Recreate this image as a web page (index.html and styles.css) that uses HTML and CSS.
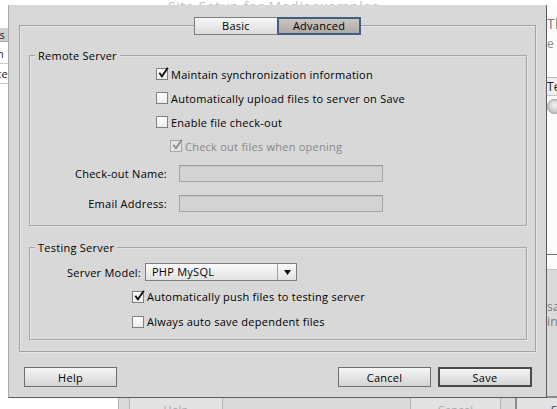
FILE: index.html
```html
<!DOCTYPE html>
<html>
<head>
<meta charset="utf-8">
<link rel="stylesheet" href="styles.css">
</head>
<body>
<div class="desk">
  <div class="titlebar"><span class="title">Site Setup for Mediaexamples</span></div>

  <div class="sidelist">
    <div class="sl-head">Servers</div>
    <div class="sl-row sl-n">Location</div>
    <div class="sl-row sl-ce">Preference</div>
  </div>

  <div class="bgwin">
    <div class="bg-upper">
      <p class="bg-lead">The settings</p>
      <p class="bg-sub">e</p>
      <div class="bg-table">
        <div class="bg-thead">Testing</div>
        <div class="bg-trow"><span class="bg-radio"></span></div>
      </div>
    </div>
    <div class="bg-lower">
      <p class="bg-note">save</p>
      <p class="bg-note">in</p>
      <div class="bg-buttons">
        <span class="ghost ghost-help">Help</span>
        <span class="ghost ghost-cancel">Cancel</span>
        <span class="ghost ghost-save">Save</span>
      </div>
    </div>
  </div>

  <div class="dialog">
    <div class="tabs">
      <span class="tab tab-basic">Basic</span>
      <span class="tab tab-adv">Advanced</span>
    </div>
    <div class="pane">
      <div class="group group-remote">
        <div class="legend">Remote Server</div>
        <div class="row check-row ind-remote">
          <span class="cb"><svg viewBox="0 0 12 12" width="12" height="12"><path d="M2.3 5.8 L4.9 9.3 L10.8 0.8" fill="none" stroke="#111" stroke-width="1.9"/></svg></span>
          <span>Maintain synchronization information</span>
        </div>
        <div class="row check-row ind-remote">
          <span class="cb"></span>
          <span>Automatically upload files to server on Save</span>
        </div>
        <div class="row check-row ind-remote">
          <span class="cb"></span>
          <span>Enable file check-out</span>
        </div>
        <div class="row check-row ind-sub disabled">
          <span class="cb cb-dis"><svg viewBox="0 0 12 12" width="12" height="12"><path d="M2.3 5.8 L4.9 9.3 L10.8 0.8" fill="none" stroke="#8a8a8a" stroke-width="1.7"/></svg></span>
          <span>Check out files when opening</span>
        </div>
        <div class="row field-row">
          <span class="flabel">Check-out Name:</span>
          <span class="field"></span>
        </div>
        <div class="row field-row">
          <span class="flabel">Email Address:</span>
          <span class="field"></span>
        </div>
      </div>

      <div class="group group-testing">
        <div class="legend">Testing Server</div>
        <div class="row select-row">
          <span class="slabel">Server Model:</span>
          <span class="select">
            <span class="select-text">PHP MySQL</span>
            <span class="select-arrow"><svg viewBox="0 0 7 5" width="7" height="5"><polygon points="0,0 7,0 3.5,5" fill="#111"/></svg></span>
          </span>
        </div>
        <div class="row check-row2 ind-test">
          <span class="cb"><svg viewBox="0 0 12 12" width="12" height="12"><path d="M2.3 5.8 L4.9 9.3 L10.8 0.8" fill="none" stroke="#111" stroke-width="1.9"/></svg></span>
          <span>Automatically push files to testing server</span>
        </div>
        <div class="row check-row2 ind-test">
          <span class="cb"></span>
          <span>Always auto save dependent files</span>
        </div>
      </div>
    </div>

    <div class="footer">
      <span class="btn">Help</span>
      <span class="spacer"></span>
      <span class="btn">Cancel</span>
      <span class="btn btn-default">Save</span>
    </div>
  </div>
</div>
</body>
</html>
```

FILE: styles.css
```css
html, body {
  margin: 0;
  padding: 0;
  background: #ffffff;
}

.desk {
  position: relative;
  width: 557px;
  height: 409px;
  overflow: hidden;
  font-family: "Open Sans", "Noto Sans", "DejaVu Sans", sans-serif;
  font-size: 11px;
  letter-spacing: 0.25px;
  color: #000;
}

/* parent window title, mostly hidden above the viewport */
.titlebar {
  height: 5px;
  overflow: hidden;
  text-align: center;
  padding-right: 10px;
}
.title {
  display: inline-block;
  margin-top: -12px;
  font-size: 14px;
  line-height: 14px;
  color: #c4c4c4;
  letter-spacing: 0.6px;
}

/* list panel at the far left, mostly behind the sheet */
.sidelist {
  position: absolute;
  left: -90px;
  top: 28px;
  width: 98px;
}
.sl-head {
  height: 13px;
  line-height: 13px;
  background: #cfcfcf;
  border-bottom: 1px solid #a8a8a8;
  text-align: right;
  padding-right: 3px;
  color: #222;
}
.sl-row {
  height: 19px;
  line-height: 19px;
  border-bottom: 1px solid #c8c8c8;
  text-align: right;
  color: #222;
}
.sl-n { padding-right: 4px; height: 21px; line-height: 23px; }
.sl-ce { padding-right: 0; }

/* the Site Setup window behind the sheet */
.bgwin {
  position: absolute;
  left: 118px;
  top: 5px;
  width: 520px;
  height: 420px;
  display: flex;
  flex-direction: column;
  border-left: 1px solid #b5b5b5;
  box-sizing: border-box;
}
.bg-upper {
  height: 265px;
  background: #fbfbfb;
  border-bottom: 1px solid #c4c4c4;
  padding-left: 428px;
  box-sizing: border-box;
}
.bg-lead {
  margin: 12px 0 0;
  font-size: 14px;
  line-height: 14px;
  color: #7a7a7a;
}
.bg-sub {
  margin: 7px 0 0;
  font-size: 12px;
  line-height: 12px;
  color: #8a8a8a;
}
.bg-table {
  margin-top: 27px;
  height: 178px;
  border-top: 1px solid #b8b8b8;
  border-bottom: 1px solid #6e6e6e;
  box-sizing: border-box;
}
.bg-thead {
  height: 17px;
  line-height: 17px;
  background: #efefef;
  border-bottom: 1px solid #c8c8c8;
  font-size: 12px;
  color: #222;
}
.bg-trow {
  height: 20px;
  display: flex;
  align-items: center;
}
.bg-radio {
  width: 13px;
  height: 13px;
  border-radius: 50%;
  background: radial-gradient(circle at 50% 40%, #f4f4f4, #b0b0b0);
  border: 1px solid #9a9a9a;
}
.bg-lower {
  flex: 1;
  background: #dadada;
  padding-left: 428px;
  padding-top: 29px;
}
.bg-note {
  margin: 0;
  font-size: 12px;
  line-height: 15px;
  color: #7a7a7a;
}
.bg-buttons {
  margin-top: 67px;
  margin-left: -418px;
  display: flex;
}
.ghost {
  box-sizing: border-box;
  height: 22px;
  border: 1px solid #b4b4b4;
  background: #e2e2e2;
  color: #a6a6a6;
  display: flex;
  align-items: center;
  justify-content: center;
  padding-top: 4px;
}
.ghost-help { width: 94px; }
.ghost-cancel { width: 91px; margin-left: 187px; }
.ghost-save { width: 96px; margin-left: 14px; border: 2px solid #8a8a8a; color: #333; justify-content: flex-start; padding-left: 34px; }

/* the sheet */
.dialog {
  position: absolute;
  left: 8px;
  top: 5px;
  width: 539px;
  height: 393px;
  box-sizing: border-box;
  background: #d8d8d8;
  border-left: 1px solid #a9a9a9;
  border-right: 1px solid #5c5c5c;
  border-bottom: 1px solid #5c5c5c;
  display: flex;
  flex-direction: column;
}

.tabs {
  display: flex;
  justify-content: center;
  margin-top: 12px;
  height: 18px;
  position: relative;
  z-index: 1;
}
.tab {
  box-sizing: border-box;
  height: 18px;
  display: flex;
  align-items: center;
  justify-content: center;
  border: 1px solid #7c7c7c;
  background: linear-gradient(#f7f7f7, #dcdcdc);
  line-height: 14px;
}
.tab-basic {
  width: 83px;
  border-right: none;
}
.tab-adv {
  width: 84px;
  border: 2px solid #3f5f86;
  background: linear-gradient(#cbc5bf, #b0aaa4);
}

.pane {
  margin: -10px 10px 0;
  height: 327px;
  box-sizing: border-box;
  border: 1px solid #a2a2a2;
  box-shadow: inset 1px 1px 0 #e6e6e6, 1px 1px 0 #e6e6e6;
  padding: 29px 8px 0 9px;
}

.group {
  border: 1px solid #a6a6a6;
  box-shadow: inset 1px 1px 0 #e4e4e4, 1px 1px 0 #e4e4e4;
}
.group-remote {
  padding-bottom: 7px;
}
.group-testing {
  margin-top: 21px;
  padding-bottom: 5px;
}
.legend {
  margin: -7px 0 0 5px;
  padding: 0 3px;
  width: fit-content;
  height: 13px;
  line-height: 13px;
  background: #d8d8d8;
}

.row {
  display: flex;
  align-items: center;
}
.check-row { height: 24px; }
.check-row2 { height: 25px; }
.ind-remote { padding-left: 126px; }
.ind-sub { padding-left: 140px; }
.ind-test { padding-left: 102px; }
.disabled { color: #888; }

.cb {
  box-sizing: border-box;
  width: 12px;
  height: 12px;
  margin-right: 3px;
  border: 1px solid #7e7e7e;
  background: linear-gradient(#ffffff, #ececec);
  position: relative;
  flex: none;
}
.cb svg {
  position: absolute;
  left: 0;
  top: -2px;
}
.cb-dis {
  border-color: #a8a8a8;
  background: #e4e4e4;
}

.field-row { height: 30px; }
.flabel {
  width: 137px;
  text-align: right;
  margin-right: 12px;
}
.field {
  box-sizing: border-box;
  width: 204px;
  height: 17px;
  border: 1px solid #a4a4a4;
  border-top-color: #9a9a9a;
  background: #d3d3d3;
  box-shadow: inset 0 1px 0 #c6c6c6;
}

.select-row {
  height: 24px;
  margin-top: 6px;
}
.slabel {
  width: 111px;
  text-align: right;
  margin-right: 4px;
}
.select {
  box-sizing: border-box;
  width: 152px;
  height: 18px;
  border: 1px solid #7e7e7e;
  background: linear-gradient(#fbfbfb, #e2e2e2);
  display: flex;
}
.select-text {
  flex: 1;
  padding-left: 6px;
  line-height: 16px;
}
.select-arrow {
  width: 18px;
  border-left: 1px solid #a0a0a0;
  display: flex;
  align-items: center;
  justify-content: center;
}

.footer {
  display: flex;
  margin-top: 15px;
  padding: 0 14px 0 15px;
  gap: 7px;
}
.spacer { flex: 1; }
.btn {
  box-sizing: border-box;
  width: 93px;
  height: 20px;
  border: 1px solid #6e6e6e;
  background: linear-gradient(#f6f6f6, #d4d4d4);
  display: flex;
  align-items: center;
  justify-content: center;
}
.btn-default {
  width: 94px;
  border: 2px solid #4a4a4a;
}
```
